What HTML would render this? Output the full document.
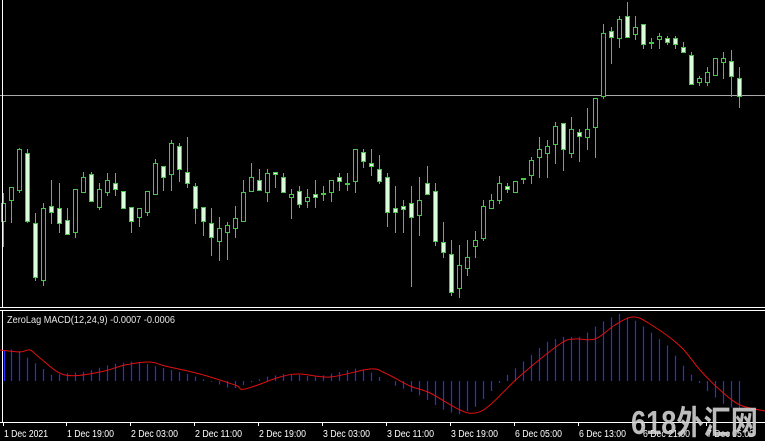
<!DOCTYPE html>
<html><head><meta charset="utf-8"><style>
html,body{margin:0;padding:0;background:#000;width:765px;height:441px;overflow:hidden}
svg{display:block}
</style></head><body>
<svg id="s" width="765" height="441" xmlns="http://www.w3.org/2000/svg" font-family="Tahoma, 'Liberation Sans', sans-serif">
<rect width="765" height="441" fill="#000"/>
<line x1="0" y1="95.5" x2="765" y2="95.5" stroke="#a8a8a8" stroke-width="1"/>
<g id="c"></g>
<line x1="0" y1="307.5" x2="765" y2="307.5" stroke="#fff"/>
<line x1="0" y1="310.5" x2="765" y2="310.5" stroke="#fff"/>
<line x1="2.5" y1="310" x2="2.5" y2="422" stroke="#fff"/>
<line x1="2.5" y1="0" x2="2.5" y2="307" stroke="#fff"/>
<line x1="0" y1="422.5" x2="765" y2="422.5" stroke="#fff"/>
<g id="h"></g>
<path id="sig" fill="none" stroke="#e01010" stroke-width="1"/>
<text x="7" y="323" fill="#e8e8e8" font-size="10" textLength="168" lengthAdjust="spacingAndGlyphs">ZeroLag MACD(12,24,9) -0.0007 -0.0006</text>
<g id="ax" fill="#fff" font-size="10"></g>
<text x="631" y="434" fill="#d0d0d0" fill-opacity="0.9" font-size="33" font-weight="bold" font-family="'Liberation Sans','Noto Sans CJK SC',sans-serif" textLength="127" lengthAdjust="spacingAndGlyphs">618外汇网</text>
</svg>
<script>
var C=[[3,193,203,221,246,0],[11,187,187,200,222,0],[19,148,149,190,192,0],[27,149,153,221,222,1],[35,213,223,277,280,1],[43,203,208,280,285,0],[51,180,206,212,223,1],[59,183,208,223,232,1],[67,208,220,234,234,1],[75,189,189,232,237,0],[83,172,177,192,192,0],[91,172,174,201,201,1],[99,183,189,207,209,0],[107,173,180,192,195,0],[115,173,183,189,195,1],[123,191,191,208,208,1],[131,207,207,221,232,1],[139,208,208,217,226,0],[147,191,191,212,215,0],[155,159,163,194,194,0],[163,166,166,177,190,1],[171,140,143,174,190,0],[179,143,146,169,181,1],[187,137,172,183,187,1],[195,183,186,208,223,1],[203,207,207,221,235,1],[211,208,223,237,255,1],[219,217,228,241,260,0],[227,222,225,232,259,0],[235,206,218,228,237,0],[243,180,192,221,221,0],[251,163,177,191,191,0],[259,169,180,190,190,1],[267,169,173,192,201,0],[275,172,172,174,187,1],[283,173,177,192,192,1],[291,189,194,197,218,0],[299,186,191,204,207,1],[307,189,197,201,207,0],[315,180,194,197,207,1],[323,186,193,194,200,0],[331,180,180,192,201,0],[339,173,177,181,190,1],[347,173,183,184,190,0],[355,149,149,181,192,0],[363,149,152,161,167,1],[371,149,163,166,175,1],[379,155,169,181,183,1],[387,173,177,212,226,1],[395,186,208,212,232,1],[403,200,206,209,232,1],[411,186,203,217,286,1],[419,177,200,215,235,0],[427,166,183,194,194,1],[435,183,191,241,245,1],[443,222,242,252,257,1],[451,240,254,292,295,1],[459,245,265,288,297,0],[467,240,257,268,275,0],[475,231,240,246,257,0],[483,200,206,238,240,0],[491,194,200,208,208,0],[499,176,183,200,203,0],[507,183,186,189,192,1],[515,181,181,192,192,0],[523,178,178,179,183,0],[531,157,160,175,183,0],[539,137,149,157,177,0],[547,140,146,153,177,0],[555,122,126,144,163,0],[563,123,123,149,170,1],[571,117,129,153,157,0],[579,129,132,136,161,1],[587,108,129,137,149,0],[595,98,98,127,157,0],[603,24,33,96,98,0],[611,27,31,37,63,1],[619,16,19,38,47,0],[627,2,16,37,37,1],[635,16,27,34,39,0],[643,24,24,44,48,1],[651,38,42,43,48,0],[659,33,36,39,48,0],[667,36,38,42,44,1],[675,36,38,44,48,1],[683,42,47,52,52,1],[691,52,55,84,84,1],[699,76,78,82,85,0],[707,67,72,82,85,0],[715,58,58,75,75,0],[723,52,58,62,78,0],[731,50,61,76,96,1],[739,67,78,96,107,1]];
var g='',G='#46c846';
C.forEach(function(c){var x=c[0],h=c[1],t=c[2],b=c[3],l=c[4],f=c[5];
g+='<line x1="'+(x+.5)+'" y1="'+h+'" x2="'+(x+.5)+'" y2="'+t+'" stroke="'+G+'"/>';
g+='<line x1="'+(x+.5)+'" y1="'+b+'" x2="'+(x+.5)+'" y2="'+(l+1)+'" stroke="'+G+'"/>';
var hh=Math.max(b-t,1);
g+='<rect x="'+(x-1.5)+'" y="'+(t+.5)+'" width="4" height="'+hh+'" fill="'+(f?'#d8ffd8':'#000')+'" stroke="'+G+'"/>';});
document.getElementById('c').innerHTML=g;
var S=[[0,350],[20,352],[30,350],[40,358],[65,375],[100,372],[125,365],[150,362],[165,366],[200,374],[235,385],[245,389],[280,377],[300,374],[330,377],[370,369],[385,373],[410,386],[430,393],[460,410],[475,413],[490,405],[520,376],[560,344],[575,339],[595,339],[615,325],[633,317],[650,324],[680,346],[700,370],[720,390],[740,405],[765,411]];
var d='M'+S[0][0]+','+S[0][1];
for(var i=0;i<S.length-1;i++){var p0=S[Math.max(i-1,0)],p1=S[i],p2=S[i+1],p3=S[Math.min(i+2,S.length-1)];
d+=' C'+(p1[0]+(p2[0]-p0[0])/6).toFixed(1)+','+(p1[1]+(p2[1]-p0[1])/6).toFixed(1)+' '+(p2[0]-(p3[0]-p1[0])/6).toFixed(1)+','+(p2[1]-(p3[1]-p1[1])/6).toFixed(1)+' '+p2[0]+','+p2[1];}
document.getElementById('sig').setAttribute('d',d);
function sy(x){for(var i=0;i<S.length-1;i++){if(x>=S[i][0]&&x<=S[i+1][0]){var a=S[i],b=S[i+1];return a[1]+(b[1]-a[1])*(x-a[0])/(b[0]-a[0]);}}return 411;}
var hs='',Z=381;
C.forEach(function(c){var x=c[0];if(x<5)x=4;var y=sy(Math.min(x+14,765));y=Z+(y-Z)*1.05;
if(x>=740)return;
hs+='<line x1="'+(x+.5)+'" y1="'+Z+'" x2="'+(x+.5)+'" y2="'+y.toFixed(1)+'" stroke="#2a2aff" stroke-width="1.2"/>';});
document.getElementById('h').innerHTML=hs;
var L=[[4,'1 Dec 2021'],[67,'1 Dec 19:00'],[131,'2 Dec 03:00'],[195,'2 Dec 11:00'],[259,'2 Dec 19:00'],[323,'3 Dec 03:00'],[387,'3 Dec 11:00'],[451,'3 Dec 19:00'],[515,'6 Dec 05:00'],[579,'6 Dec 13:00'],[643,'6 Dec 21:00'],[707,'7 Dec 05:00']];
var a='';L.forEach(function(l,i){a+='<line x1="'+(l[0]-.5)+'" y1="422" x2="'+(l[0]-.5)+'" y2="426" stroke="#fff"/><text x="'+(l[0]+0)+'" y="437" textLength="'+(i?47:44)+'" lengthAdjust="spacingAndGlyphs">'+l[1]+'</text>';});
document.getElementById('ax').innerHTML=a;
</script>
</body></html>
